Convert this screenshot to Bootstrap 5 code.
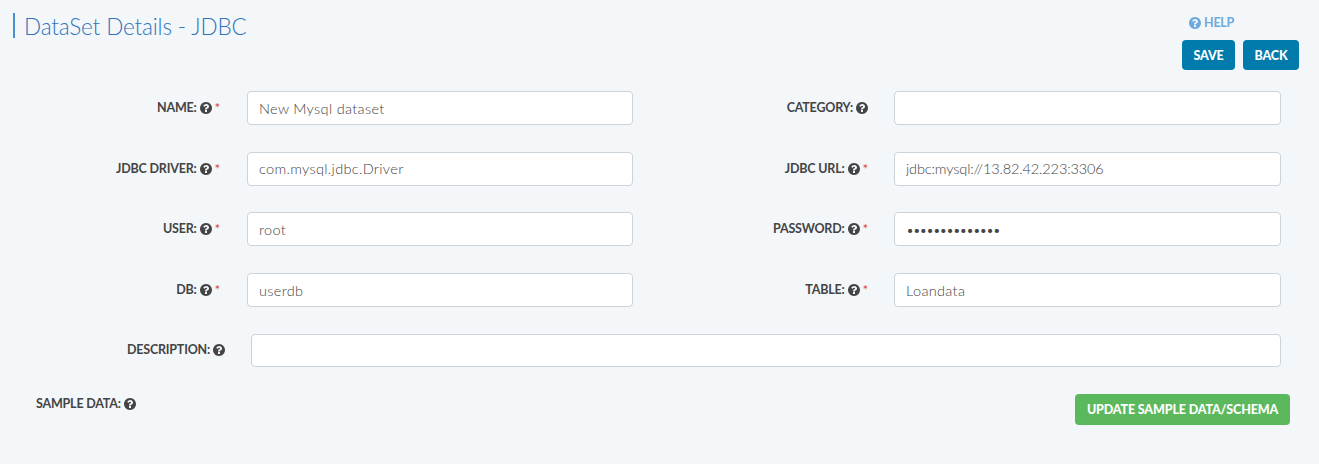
<!DOCTYPE html>
<html lang="en">
<head>
<meta charset="utf-8">
<meta name="viewport" content="width=device-width, initial-scale=1">
<title>DataSet Details - JDBC</title>
<link href="https://cdn.jsdelivr.net/npm/bootstrap@5.3.0/dist/css/bootstrap.min.css" rel="stylesheet">
<style>
body{background:#f3f7fa;font-family:Lato,"Liberation Sans",sans-serif;color:#444;min-height:464px;overflow:hidden}
.page-head{height:91px;padding:13px 20px 0 13px}
.page-title{font-size:22.5px;font-weight:300;line-height:27px;color:#3173ba;border-left:2px solid #4a8fd0;padding-left:9px;letter-spacing:-.15px;height:25px;white-space:nowrap}
.help-link{font-size:12.5px;font-weight:700;line-height:16px;letter-spacing:-.25px;color:#6fa8dc;margin:2px 0 9px 7px;gap:3px}
.help-icon{width:12px;height:12px;flex:none}
.btn-app{font-size:12.5px;font-weight:900;line-height:18px;letter-spacing:-.2px;color:#fff;border:0;border-radius:4px;padding:7px 0 5px;height:30px;white-space:nowrap}
.btn-app:hover{color:#fff}
.btn-blue{background:#007bab}
.btn-green{background:#5cb85c;width:215px;height:31px;letter-spacing:-.15px}
.form-line{display:grid;grid-template-columns:247px 386px 261px 387px;height:60.7px}
.form-line.wide-line{grid-template-columns:251px 1030px;height:60px}
.field-label{font-size:12.5px;font-weight:700;line-height:16px;height:16px;margin-top:9px;padding-right:26px;white-space:nowrap;letter-spacing:-.2px;gap:3px}
.wide-line .field-label{margin-top:8px}
.first-label{padding-right:27px}
.req{color:#e33b3b;font-size:13.5px;font-weight:400;width:5.5px;line-height:16px}
.field-box{height:34px;padding:3px 11px;font-size:14.5px;font-weight:300;letter-spacing:.33px;color:#444;border:1px solid #ccd2da;border-radius:4px;background:#fff}
.wide-line .field-box{height:33px}
.url-box{letter-spacing:-.13px}
.field-box[type=password]{font-size:14px;letter-spacing:-1.45px}
</style>
</head>
<body>
<svg class="d-none" xmlns="http://www.w3.org/2000/svg">
  <symbol id="question" viewBox="0 0 1536 1536"><path fill="currentColor" d="M896 1248v-192q0-14-9-23t-23-9H672q-14 0-23 9t-9 23v192q0 14 9 23t23 9h192q14 0 23-9t9-23zm256-672q0-88-55.500-163T958 297t-170-41q-243 0-371 213-15 24 8 42l132 100q7 6 19 6 16 0 25-12 53-68 86-92 34-24 86-24 48 0 85.500 26t37.500 59q0 38-20 61t-68 45q-63 28-115.500 86.500T640 892v36q0 14 9 23t23 9h192q14 0 23-9t9-23q0-19 21.500-49.500T972 829q32-18 49-28.500t46-35 44.500-48 28-60.500 12.500-81zm384 192q0 209-103 385.500T1153.500 1433 768 1536t-385.500-103T103 1153.500 0 768t103-385.500T382.500 103 768 0t385.500 103T1433 382.500 1536 768z"/></symbol>
</svg>
<header class="page-head d-flex justify-content-between align-items-start">
  <h1 class="page-title mb-0">DataSet Details - JDBC</h1>
  <div>
    <div class="help-link d-flex align-items-center"><svg class="help-icon"><use href="#question"/></svg><span>HELP</span></div>
    <div class="d-flex gap-2">
      <button class="btn btn-app btn-blue" style="width:53px">SAVE</button>
      <button class="btn btn-app btn-blue" style="width:56px">BACK</button>
    </div>
  </div>
</header>
<main>
  <div class="form-line">
    <label class="field-label first-label d-flex justify-content-end align-items-center"><span>NAME:</span><svg class="help-icon"><use href="#question"/></svg><span class="req">*</span></label>
    <input class="form-control field-box" value="New Mysql dataset">
    <label class="field-label d-flex justify-content-end align-items-center"><span>CATEGORY:</span><svg class="help-icon"><use href="#question"/></svg></label>
    <input class="form-control field-box">
  </div>
  <div class="form-line">
    <label class="field-label first-label d-flex justify-content-end align-items-center"><span>JDBC DRIVER:</span><svg class="help-icon"><use href="#question"/></svg><span class="req">*</span></label>
    <input class="form-control field-box" value="com.mysql.jdbc.Driver">
    <label class="field-label d-flex justify-content-end align-items-center"><span>JDBC URL:</span><svg class="help-icon"><use href="#question"/></svg><span class="req">*</span></label>
    <input class="form-control field-box url-box" value="jdbc:mysql://13.82.42.223:3306">
  </div>
  <div class="form-line">
    <label class="field-label first-label d-flex justify-content-end align-items-center"><span>USER:</span><svg class="help-icon"><use href="#question"/></svg><span class="req">*</span></label>
    <input class="form-control field-box" value="root">
    <label class="field-label d-flex justify-content-end align-items-center"><span>PASSWORD:</span><svg class="help-icon"><use href="#question"/></svg><span class="req">*</span></label>
    <input class="form-control field-box" type="password" value="datasetsecret1">
  </div>
  <div class="form-line">
    <label class="field-label first-label d-flex justify-content-end align-items-center"><span>DB:</span><svg class="help-icon"><use href="#question"/></svg><span class="req">*</span></label>
    <input class="form-control field-box" value="userdb">
    <label class="field-label d-flex justify-content-end align-items-center"><span>TABLE:</span><svg class="help-icon"><use href="#question"/></svg><span class="req">*</span></label>
    <input class="form-control field-box" value="Loandata">
  </div>
  <div class="form-line wide-line">
    <label class="field-label d-flex justify-content-end align-items-center"><span>DESCRIPTION:</span><svg class="help-icon"><use href="#question"/></svg></label>
    <input class="form-control field-box">
  </div>
  <div class="d-flex justify-content-between align-items-start" style="padding:0 29px 0 36px">
    <div class="field-label d-flex align-items-center pe-0" style="margin-top:2px"><span>SAMPLE DATA:</span><svg class="help-icon"><use href="#question"/></svg></div>
    <button class="btn btn-app btn-green">UPDATE SAMPLE DATA/SCHEMA</button>
  </div>
</main>
<script src="https://cdn.jsdelivr.net/npm/bootstrap@5.3.0/dist/js/bootstrap.bundle.min.js"></script>
</body>
</html>
